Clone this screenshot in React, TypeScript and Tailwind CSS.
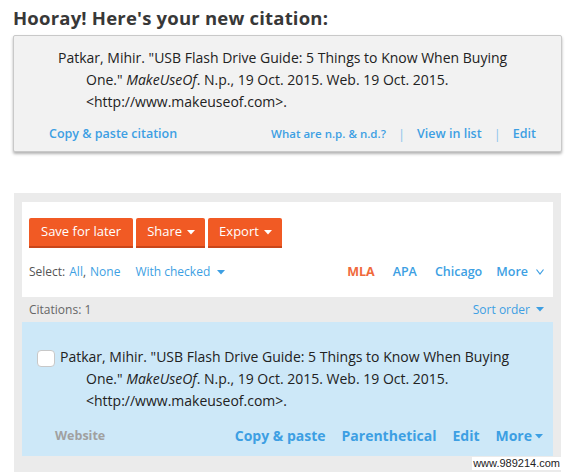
import React from "react";

const Caret = ({ className = "" }: { className?: string }) => (
  <svg width="8" height="5" viewBox="0 0 8 5" className={className}>
    <path d="M0 0 L8 0 L4 4.5 Z" fill="currentColor" />
  </svg>
);

export default function App() {
  return (
    <div className="relative w-[578px] h-[472px] overflow-hidden bg-white font-['Open_Sans',sans-serif]">
      <h1 className="pl-[13px] pt-[6px] text-[18.5px] tracking-[0.2px] leading-[24px] font-bold text-[#383838]">
        Hooray! Here's your new citation:
      </h1>

      <div className="ml-[13px] mt-[5px] w-[549px] h-[117px] rounded-[2px] border border-[#c9c9c9] bg-[#f2f2f2] shadow-[0_2px_3px_rgba(0,0,0,0.3)]">
        <p className="pt-[11px] pl-[72px] pr-[30px] -indent-[28px] text-[14px] leading-[22px] text-[#222]">
          Patkar, Mihir. "USB Flash Drive Guide: 5 Things to Know When Buying One."{" "}
          <i>MakeUseOf</i>. N.p., 19 Oct. 2015. Web. 19 Oct. 2015.
          &lt;http://www.makeuseof.com&gt;.
        </p>
        <div className="mt-[11px] flex items-center pl-[35px] pr-[25px] text-[#3d9fe3] leading-[20px]">
          <span className="text-[12.5px] font-semibold">Copy &amp; paste citation</span>
          <span className="ml-auto text-[11.5px] font-semibold">What are n.p. &amp; n.d.?</span>
          <span className="mx-[12px] text-[13px] text-[#8cc4ec]">|</span>
          <span className="text-[12.5px] font-semibold">View in list</span>
          <span className="mx-[12px] text-[13px] text-[#8cc4ec]">|</span>
          <span className="text-[12.5px] font-semibold">Edit</span>
        </div>
      </div>

      <div className="ml-[14px] mt-[41px] w-[547px] h-[300px] bg-[#ebebeb] pt-[9px] px-[8px]">
        <div className="bg-white h-[95px] pt-[16px] px-[7px]">
          <div className="flex gap-[3px]">
            <button className="h-[30px] px-[12px] bg-[#f15a24] border-b-2 border-[#c9461a] rounded-t-[2px] text-white text-[13px]">
              Save for later
            </button>
            <button className="h-[30px] pl-[11px] pr-[10px] bg-[#f15a24] border-b-2 border-[#c9461a] rounded-t-[2px] text-white text-[13px] flex items-center gap-[5px]">
              Share <Caret />
            </button>
            <button className="h-[30px] pl-[11px] pr-[10px] bg-[#f15a24] border-b-2 border-[#c9461a] rounded-t-[2px] text-white text-[13px] flex items-center gap-[5px]">
              Export <Caret />
            </button>
          </div>
          <div className="mt-[15px] flex items-center text-[12px] leading-[18px]">
            <span className="text-[#555]">Select:</span>
            <span className="ml-[4px] text-[#3d9fe3]">All</span>
            <span className="text-[#555]">,</span>
            <span className="ml-[4px] text-[#3d9fe3]">None</span>
            <span className="ml-[15px] text-[#3d9fe3] flex items-center gap-[7px]">
              With checked <Caret />
            </span>
            <span className="ml-auto text-[12.5px] font-bold text-[#f06a3c]">MLA</span>
            <span className="ml-[18px] text-[12.5px] font-semibold text-[#3d9fe3]">APA</span>
            <span className="ml-[18px] text-[12.5px] font-semibold text-[#3d9fe3]">Chicago</span>
            <span className="ml-[14px] mr-[2px] text-[12.5px] font-semibold text-[#3d9fe3] flex items-center gap-[8px]">
              More
              <svg width="8" height="6" viewBox="0 0 8 6">
                <path d="M0.5 0.5 L4 5 L7.5 0.5" fill="none" stroke="currentColor" strokeWidth="1.2" />
              </svg>
            </span>
          </div>
        </div>
        <div className="h-[25px] flex items-center px-[7px] text-[12px]">
          <span className="text-[#666]">Citations: 1</span>
          <span className="ml-auto mr-[2px] text-[#3d9fe3] flex items-center gap-[6px]">
            Sort order <Caret />
          </span>
        </div>
        <div className="bg-[#cde8f8] h-[134px] pt-[24px] pl-[15px] pr-[10px]">
          <div className="flex">
            <div className="mt-[4px] w-[18px] h-[17px] shrink-0 rounded-[4px] border border-[#c8c8c8] bg-white" />
            <p className="ml-[5px] pl-[26px] -indent-[26px] text-[14px] leading-[22px] text-[#222]">
              Patkar, Mihir. "USB Flash Drive Guide: 5 Things to Know When Buying One."{" "}
              <i>MakeUseOf</i>. N.p., 19 Oct. 2015. Web. 19 Oct. 2015.
              &lt;http://www.makeuseof.com&gt;.
            </p>
          </div>
          <div className="mt-[14px] flex items-center pl-[18px] leading-[20px]">
            <span className="text-[12.5px] font-bold text-[#a0a0a0]">Website</span>
            <span className="ml-auto text-[14px] font-bold text-[#3d9fe3]">Copy &amp; paste</span>
            <span className="ml-[16px] text-[14px] font-bold text-[#3d9fe3]">Parenthetical</span>
            <span className="ml-[16px] text-[14px] font-bold text-[#3d9fe3]">Edit</span>
            <span className="ml-[16px] text-[14px] font-bold text-[#3d9fe3] flex items-center gap-[3px]">
              More <Caret />
            </span>
          </div>
        </div>
      </div>

      <span className="absolute right-[17px] bottom-[2px] bg-white px-[1px] text-[11px] leading-[13px] text-[#222] font-['Liberation_Sans',sans-serif]">
        www.989214.com
      </span>
    </div>
  );
}
